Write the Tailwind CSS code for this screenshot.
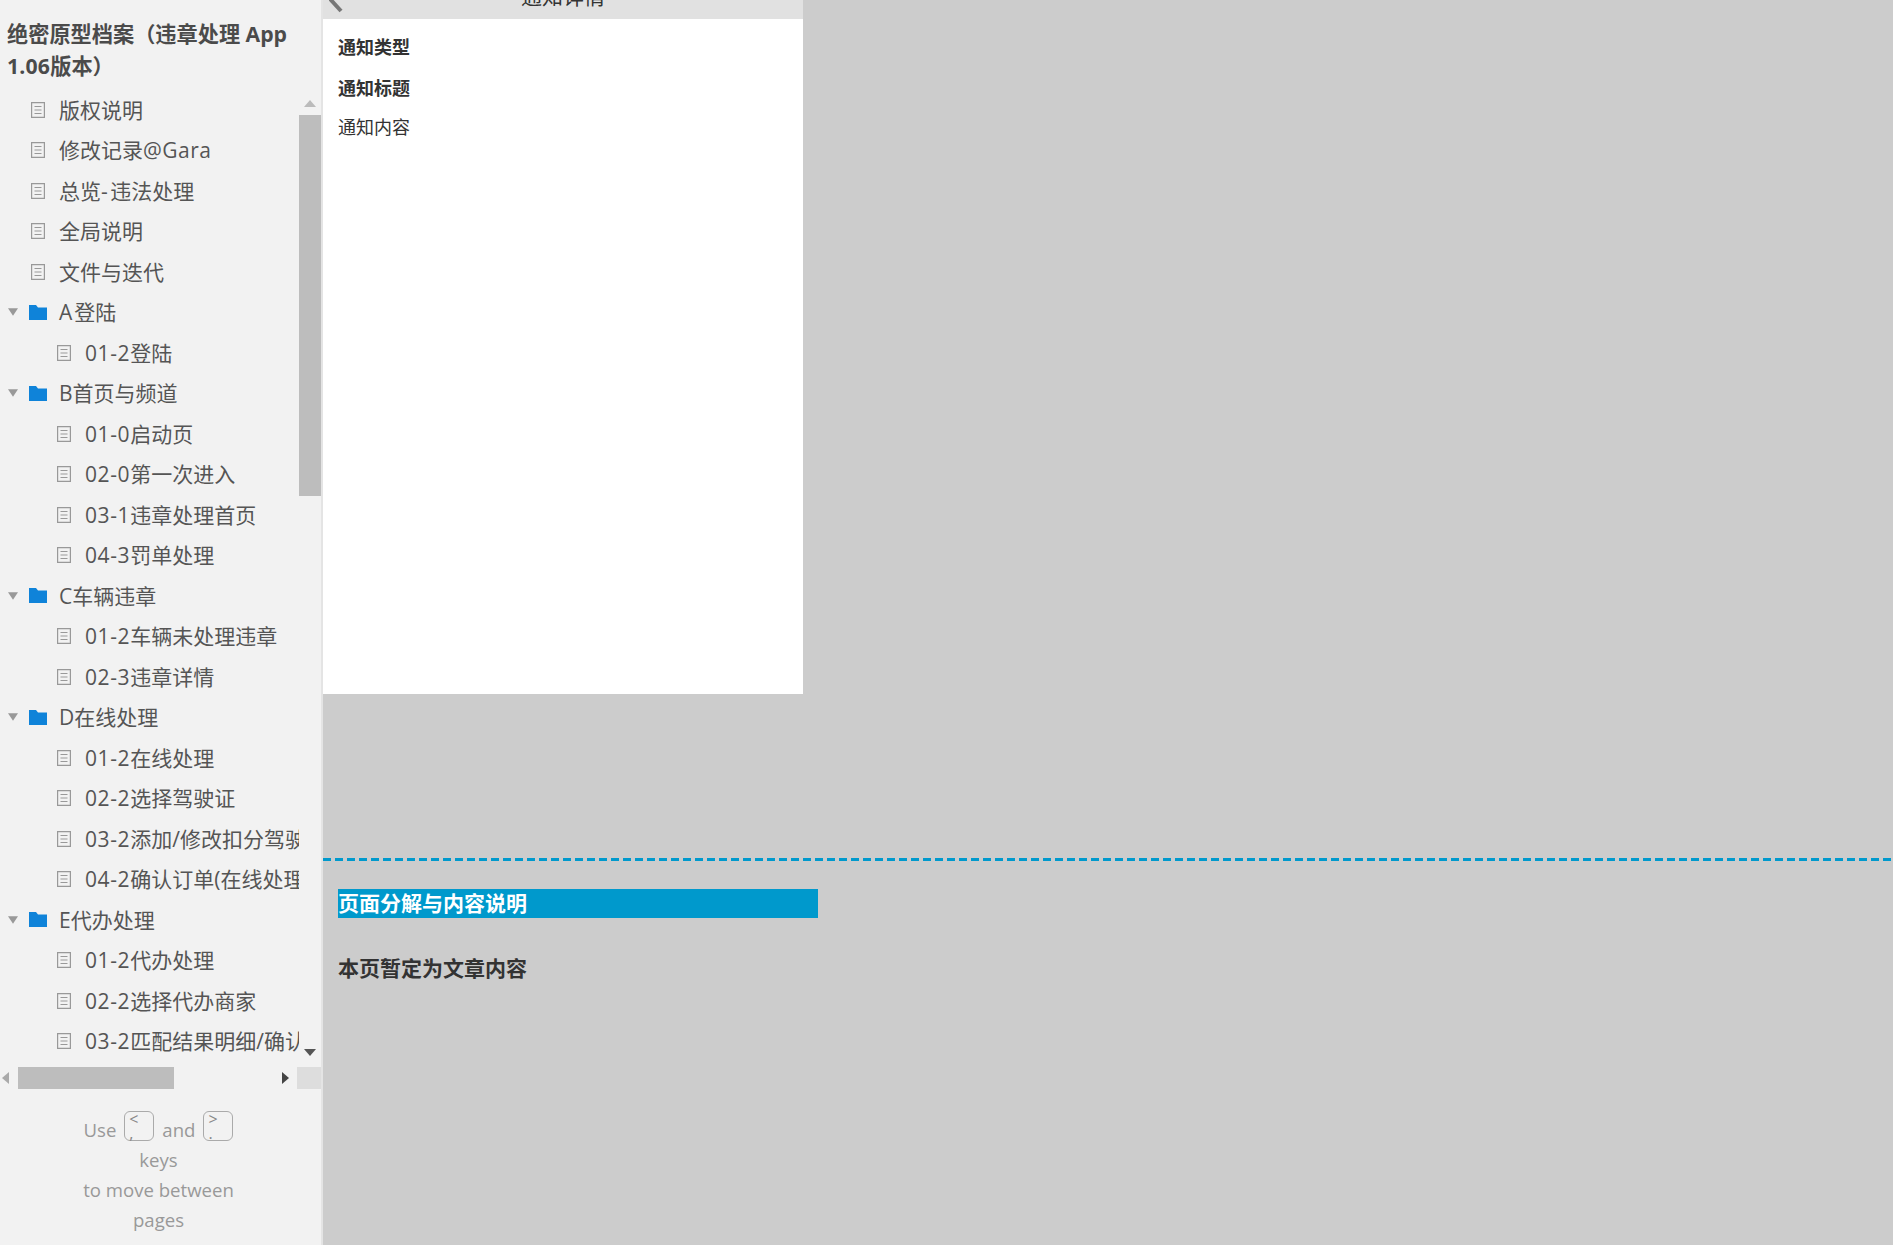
<!DOCTYPE html>
<html lang="zh">
<head>
    <meta charset="UTF-8">
    <title>绝密原型档案</title>
    <script src="https://cdn.jsdelivr.net/npm/@tailwindcss/browser@4"></script>
</head>
<body class="bg-[#cccccc] text-[#333333] overflow-hidden font-['Open_Sans','Noto_Sans_CJK_SC',sans-serif]">
<div class="flex h-[1245px] w-[1893px]">
    <!-- Sidebar -->
    <aside class="w-[323px] shrink-0 bg-[#f2f2f2] border-r-2 border-r-[#e4e4e4] flex flex-col h-full">
        <h1 class="pt-[17.5px] pl-[7px] pr-[20px] h-[89.5px] text-[21.2px] leading-[32.5px] font-bold text-[#4b4b4b]">绝密原型档案（违章处理 App <span class="tracking-[0.2px]">1.06</span>版本）</h1>
        <div class="flex h-[972.5px] relative">
            <ul id="tree" class="w-[299px] overflow-hidden text-[21px] leading-[40.5px] text-[#555555] whitespace-nowrap">
                <li class="h-[40.5px] flex items-center pl-[31px]"><svg class="w-[14px] h-[16px] mr-[14px] shrink-0" viewBox="0 0 14 16" fill="none" stroke="#999" stroke-width="1.2"><path d="M.6.6h12.8v14.8H.6zM3.5 4.5h7M3.5 8h7M3.5 11.500h7"/></svg>版权说明</li>
                <li class="h-[40.5px] flex items-center pl-[31px]"><svg class="w-[14px] h-[16px] mr-[14px] shrink-0" viewBox="0 0 14 16" fill="none" stroke="#999" stroke-width="1.2"><path d="M.6.6h12.8v14.8H.6zM3.5 4.5h7M3.5 8h7M3.5 11.500h7"/></svg>修改记录<span class="tracking-[0.5px]">@Gara</span></li>
                <li class="h-[40.5px] flex items-center pl-[31px]"><svg class="w-[14px] h-[16px] mr-[14px] shrink-0" viewBox="0 0 14 16" fill="none" stroke="#999" stroke-width="1.2"><path d="M.6.6h12.8v14.8H.6zM3.5 4.5h7M3.5 8h7M3.5 11.500h7"/></svg>总览<span class="tracking-[2.4px]">-</span>违法处理</li>
                <li class="h-[40.5px] flex items-center pl-[31px]"><svg class="w-[14px] h-[16px] mr-[14px] shrink-0" viewBox="0 0 14 16" fill="none" stroke="#999" stroke-width="1.2"><path d="M.6.6h12.8v14.8H.6zM3.5 4.5h7M3.5 8h7M3.5 11.500h7"/></svg>全局说明</li>
                <li class="h-[40.5px] flex items-center pl-[31px]"><svg class="w-[14px] h-[16px] mr-[14px] shrink-0" viewBox="0 0 14 16" fill="none" stroke="#999" stroke-width="1.2"><path d="M.6.6h12.8v14.8H.6zM3.5 4.5h7M3.5 8h7M3.5 11.500h7"/></svg>文件与迭代</li>
                <li class="h-[40.5px] flex items-center pl-[8px]"><svg class="w-[10px] h-[8px] mr-[11px] shrink-0" viewBox="0 0 11 8" fill="#999"><path d="M0 0h11L5.500 8z"/></svg><svg class="w-[18px] h-[15px] mr-[12px] shrink-0" viewBox="0 0 18 15" fill="#0f83d9"><path d="M0 0h7l2 2.500h9V15H0z"/></svg><span class="tracking-[2px]">A</span>登陆</li>
                <li class="h-[40.5px] flex items-center pl-[57px]"><svg class="w-[14px] h-[16px] mr-[14px] shrink-0" viewBox="0 0 14 16" fill="none" stroke="#999" stroke-width="1.2"><path d="M.6.6h12.8v14.8H.6zM3.5 4.5h7M3.5 8h7M3.5 11.500h7"/></svg><span class="tracking-[0.6px]">01-2</span>登陆</li>
                <li class="h-[40.5px] flex items-center pl-[8px]"><svg class="w-[10px] h-[8px] mr-[11px] shrink-0" viewBox="0 0 11 8" fill="#999"><path d="M0 0h11L5.500 8z"/></svg><svg class="w-[18px] h-[15px] mr-[12px] shrink-0" viewBox="0 0 18 15" fill="#0f83d9"><path d="M0 0h7l2 2.500h9V15H0z"/></svg>B首页与频道</li>
                <li class="h-[40.5px] flex items-center pl-[57px]"><svg class="w-[14px] h-[16px] mr-[14px] shrink-0" viewBox="0 0 14 16" fill="none" stroke="#999" stroke-width="1.2"><path d="M.6.6h12.8v14.8H.6zM3.5 4.5h7M3.5 8h7M3.5 11.500h7"/></svg><span class="tracking-[0.6px]">01-0</span>启动页</li>
                <li class="h-[40.5px] flex items-center pl-[57px]"><svg class="w-[14px] h-[16px] mr-[14px] shrink-0" viewBox="0 0 14 16" fill="none" stroke="#999" stroke-width="1.2"><path d="M.6.6h12.8v14.8H.6zM3.5 4.5h7M3.5 8h7M3.5 11.500h7"/></svg><span class="tracking-[0.6px]">02-0</span>第一次进入</li>
                <li class="h-[40.5px] flex items-center pl-[57px]"><svg class="w-[14px] h-[16px] mr-[14px] shrink-0" viewBox="0 0 14 16" fill="none" stroke="#999" stroke-width="1.2"><path d="M.6.6h12.8v14.8H.6zM3.5 4.5h7M3.5 8h7M3.5 11.500h7"/></svg><span class="tracking-[0.6px]">03-1</span>违章处理首页</li>
                <li class="h-[40.5px] flex items-center pl-[57px]"><svg class="w-[14px] h-[16px] mr-[14px] shrink-0" viewBox="0 0 14 16" fill="none" stroke="#999" stroke-width="1.2"><path d="M.6.6h12.8v14.8H.6zM3.5 4.5h7M3.5 8h7M3.5 11.500h7"/></svg><span class="tracking-[0.6px]">04-3</span>罚单处理</li>
                <li class="h-[40.5px] flex items-center pl-[8px]"><svg class="w-[10px] h-[8px] mr-[11px] shrink-0" viewBox="0 0 11 8" fill="#999"><path d="M0 0h11L5.500 8z"/></svg><svg class="w-[18px] h-[15px] mr-[12px] shrink-0" viewBox="0 0 18 15" fill="#0f83d9"><path d="M0 0h7l2 2.500h9V15H0z"/></svg>C车辆违章</li>
                <li class="h-[40.5px] flex items-center pl-[57px]"><svg class="w-[14px] h-[16px] mr-[14px] shrink-0" viewBox="0 0 14 16" fill="none" stroke="#999" stroke-width="1.2"><path d="M.6.6h12.8v14.8H.6zM3.5 4.5h7M3.5 8h7M3.5 11.500h7"/></svg><span class="tracking-[0.6px]">01-2</span>车辆未处理违章</li>
                <li class="h-[40.5px] flex items-center pl-[57px]"><svg class="w-[14px] h-[16px] mr-[14px] shrink-0" viewBox="0 0 14 16" fill="none" stroke="#999" stroke-width="1.2"><path d="M.6.6h12.8v14.8H.6zM3.5 4.5h7M3.5 8h7M3.5 11.500h7"/></svg><span class="tracking-[0.6px]">02-3</span>违章详情</li>
                <li class="h-[40.5px] flex items-center pl-[8px]"><svg class="w-[10px] h-[8px] mr-[11px] shrink-0" viewBox="0 0 11 8" fill="#999"><path d="M0 0h11L5.500 8z"/></svg><svg class="w-[18px] h-[15px] mr-[12px] shrink-0" viewBox="0 0 18 15" fill="#0f83d9"><path d="M0 0h7l2 2.500h9V15H0z"/></svg>D在线处理</li>
                <li class="h-[40.5px] flex items-center pl-[57px]"><svg class="w-[14px] h-[16px] mr-[14px] shrink-0" viewBox="0 0 14 16" fill="none" stroke="#999" stroke-width="1.2"><path d="M.6.6h12.8v14.8H.6zM3.5 4.5h7M3.5 8h7M3.5 11.500h7"/></svg><span class="tracking-[0.6px]">01-2</span>在线处理</li>
                <li class="h-[40.5px] flex items-center pl-[57px]"><svg class="w-[14px] h-[16px] mr-[14px] shrink-0" viewBox="0 0 14 16" fill="none" stroke="#999" stroke-width="1.2"><path d="M.6.6h12.8v14.8H.6zM3.5 4.5h7M3.5 8h7M3.5 11.500h7"/></svg><span class="tracking-[0.6px]">02-2</span>选择驾驶证</li>
                <li class="h-[40.5px] flex items-center pl-[57px]"><svg class="w-[14px] h-[16px] mr-[14px] shrink-0" viewBox="0 0 14 16" fill="none" stroke="#999" stroke-width="1.2"><path d="M.6.6h12.8v14.8H.6zM3.5 4.5h7M3.5 8h7M3.5 11.500h7"/></svg><span class="tracking-[0.6px]">03-2</span>添加/修改扣分驾驶证</li>
                <li class="h-[40.5px] flex items-center pl-[57px]"><svg class="w-[14px] h-[16px] mr-[14px] shrink-0" viewBox="0 0 14 16" fill="none" stroke="#999" stroke-width="1.2"><path d="M.6.6h12.8v14.8H.6zM3.5 4.5h7M3.5 8h7M3.5 11.500h7"/></svg><span class="tracking-[0.6px]">04-2</span>确认订单(在线处理)</li>
                <li class="h-[40.5px] flex items-center pl-[8px]"><svg class="w-[10px] h-[8px] mr-[11px] shrink-0" viewBox="0 0 11 8" fill="#999"><path d="M0 0h11L5.500 8z"/></svg><svg class="w-[18px] h-[15px] mr-[12px] shrink-0" viewBox="0 0 18 15" fill="#0f83d9"><path d="M0 0h7l2 2.500h9V15H0z"/></svg>E代办处理</li>
                <li class="h-[40.5px] flex items-center pl-[57px]"><svg class="w-[14px] h-[16px] mr-[14px] shrink-0" viewBox="0 0 14 16" fill="none" stroke="#999" stroke-width="1.2"><path d="M.6.6h12.8v14.8H.6zM3.5 4.5h7M3.5 8h7M3.5 11.500h7"/></svg><span class="tracking-[0.6px]">01-2</span>代办处理</li>
                <li class="h-[40.5px] flex items-center pl-[57px]"><svg class="w-[14px] h-[16px] mr-[14px] shrink-0" viewBox="0 0 14 16" fill="none" stroke="#999" stroke-width="1.2"><path d="M.6.6h12.8v14.8H.6zM3.5 4.5h7M3.5 8h7M3.5 11.500h7"/></svg><span class="tracking-[0.6px]">02-2</span>选择代办商家</li>
                <li class="h-[40.5px] flex items-center pl-[57px]"><svg class="w-[14px] h-[16px] mr-[14px] shrink-0" viewBox="0 0 14 16" fill="none" stroke="#999" stroke-width="1.2"><path d="M.6.6h12.8v14.8H.6zM3.5 4.5h7M3.5 8h7M3.5 11.500h7"/></svg><span class="tracking-[0.6px]">03-2</span>匹配结果明细/确认订单</li>
            </ul>
            <!-- vertical scrollbar -->
            <div class="w-[22px] flex flex-col items-center">
                <svg class="w-[12px] h-[7px] mt-[10px] mb-[8px]" viewBox="0 0 12 7" fill="#bbb"><path d="M6 0l6 7H0z"/></svg>
                <div class="w-full h-[381px] bg-[#bdbdbd]"></div>
                <svg class="w-[12px] h-[7px] mt-auto mb-[6px]" viewBox="0 0 12 7" fill="#555"><path d="M0 0h12L6 7z"/></svg>
            </div>
        </div>
        <!-- horizontal scrollbar -->
        <div class="flex items-center h-[22px] mt-[5px]">
            <svg class="w-[7px] h-[12px] ml-[2px] mr-[9px]" viewBox="0 0 7 12" fill="#aaa"><path d="M7 0v12L0 6z"/></svg>
            <div class="w-[156px] h-full bg-[#bdbdbd]"></div>
            <svg class="w-[7px] h-[12px] ml-[108px]" viewBox="0 0 7 12" fill="#444"><path d="M0 0l7 6-7 6z"/></svg>
            <div class="ml-auto w-[24px] h-full bg-[#dddddd]"></div>
        </div>
        <!-- keyboard hint -->
        <div class="flex-1 pt-[22px] pl-[28px] pr-[32px] text-center text-[18.600px] leading-[30px] text-[#999999]">
            <div class="flex justify-center items-end">Use<span class="inline-block mx-[8px] mb-[4px] w-[30px] h-[30px] rounded-[6px] border-[1.5px] border-[#aaa] text-[16px] leading-[14px] text-left pl-[4px] text-[#888]">&lt;<br>,</span>and<span class="inline-block ml-[8px] mb-[4px] w-[30px] h-[30px] rounded-[6px] border-[1.5px] border-[#aaa] text-[16px] leading-[14px] text-left pl-[4px] text-[#888]">&gt;<br>.</span></div>
            <div>keys</div>
            <div>to move between</div>
            <div>pages</div>
        </div>
    </aside>

    <!-- Main -->
    <main class="flex-1 min-w-0">
        <section class="w-[480px] h-[694px] bg-white">
            <header class="h-[19px] bg-[#e1e1e1] relative overflow-hidden text-center text-[21px] leading-[24px]">
                <svg class="absolute left-[6px] top-0 w-[16px] h-[14px]" viewBox="0 0 16 14" fill="none" stroke="#777" stroke-width="4"><path d="M1 -1l11 12"/></svg>
                <span class="block -mt-[16px]">通知详情</span>
            </header>
            <div class="pl-[15px] pt-[15px] text-[18px] leading-[26px]">
                <p class="font-bold">通知类型</p>
                <p class="font-bold mt-[15px]">通知标题</p>
                <p class="mt-[13px]">通知内容</p>
            </div>
        </section>
        <!-- dashed divider -->
        <div class="mt-[164px] h-[3px] bg-[repeating-linear-gradient(90deg,#0099cc_0,#0099cc_8px,transparent_8px,transparent_12px)]"></div>
        <div class="pl-[15px] pt-[28px]">
            <h2 class="w-[480px] h-[29px] bg-[#0099cc] text-white text-[21px] leading-[29px] font-bold">页面分解与内容说明</h2>
            <p class="mt-[35px] text-[21px] leading-[30px] font-bold">本页暂定为文章内容</p>
        </div>
    </main>
</div>
</body>
</html>
